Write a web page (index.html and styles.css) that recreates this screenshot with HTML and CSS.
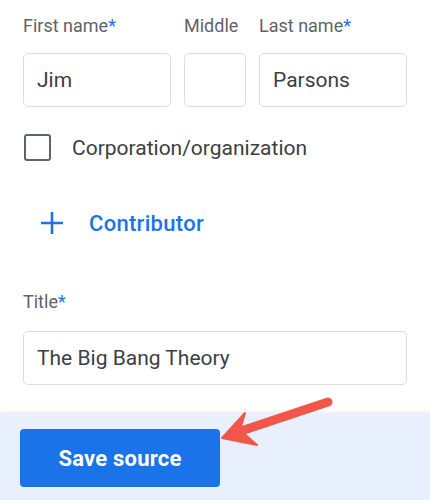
FILE: index.html
```html
<!DOCTYPE html>
<html>
<head>
<meta charset="utf-8">
<link rel="stylesheet" href="styles.css">
</head>
<body>
<div class="page">
  <div class="form">
    <div class="name-grid">
      <div class="label">First name<span class="req">*</span></div>
      <div class="label">Middle</div>
      <div class="label">Last name<span class="req">*</span></div>
      <div class="field">Jim</div>
      <div class="field"></div>
      <div class="field">Parsons</div>
    </div>
    <div class="check-row">
      <span class="checkbox"></span>
      <span class="check-text">Corporation/organization</span>
    </div>
    <div class="add-row">
      <svg class="plus" width="22" height="22" viewBox="0 0 22 22"><path d="M11 0V22M0 11H22" stroke="#1a73e8" stroke-width="2.6" fill="none"/></svg>
      <span class="add-text">Contributor</span>
    </div>
    <div class="label title-label">Title<span class="req">*</span></div>
    <div class="field wide">The Big Bang Theory</div>
  </div>
  <div class="footer">
    <button class="save">Save source</button>
  </div>
  <svg class="arrow" width="430" height="500" viewBox="0 0 430 500">
    <line x1="328" y1="402" x2="238" y2="432" stroke="#f2564a" stroke-width="9" stroke-linecap="round"/>
    <path d="M222 438 L245 413 L240 430 L257 445 Z" fill="#f2564a" stroke="#f2564a" stroke-width="2" stroke-linejoin="round"/>
  </svg>
</div>
</body>
</html>
```
FILE: styles.css
```css
* { box-sizing: border-box; }
html, body { margin: 0; padding: 0; background: #fff; }
body { font-family: Roboto, "Noto Sans", Arial, sans-serif; }
.page { position: relative; width: 430px; height: 500px; overflow: hidden; display: flex; flex-direction: column; }
.form { padding: 16px 0 0 23px; flex: 1; }
.name-grid { display: grid; grid-template-columns: 148px 62px 148px; column-gap: 13px; row-gap: 17px; }
.label { font-size: 18px; line-height: 20px; color: #5f6368; white-space: nowrap; }
.req { color: #1a73e8; }
.field { height: 54px; border: 1px solid #dadce0; border-radius: 5px; font-size: 21px; color: #3c4043; padding-left: 13px; display: flex; align-items: center; }
.check-row { display: flex; align-items: center; margin-top: 27px; height: 27px; }
.checkbox { width: 27px; height: 27px; border: 2.6px solid #5f6368; border-radius: 3px; margin-left: 1px; }
.check-text { margin-left: 21px; font-size: 21px; color: #3c4043; }
.add-row { display: flex; align-items: center; margin-top: 51px; height: 22px; padding-left: 18px; }
.add-text { margin-left: 26px; font-size: 22px; font-weight: 500; color: #1a73e8; letter-spacing: 0.3px; }
.title-label { margin-top: 58px; }
.wide { width: 384px; height: 54px; margin-top: 19px; }
.footer { height: 87px; background: #e8f0fe; box-shadow: 0 -1px 4px rgba(0,0,0,0.08); padding: 16px 0 0 20px; }
.save { width: 200px; height: 58px; border: none; border-radius: 4px; background: #1a73e8; color: #fff; font-family: Roboto, Arial, sans-serif; font-size: 22px; font-weight: 700; letter-spacing: 0.2px; }
.arrow { position: absolute; left: 0; top: 0; pointer-events: none; }
```
